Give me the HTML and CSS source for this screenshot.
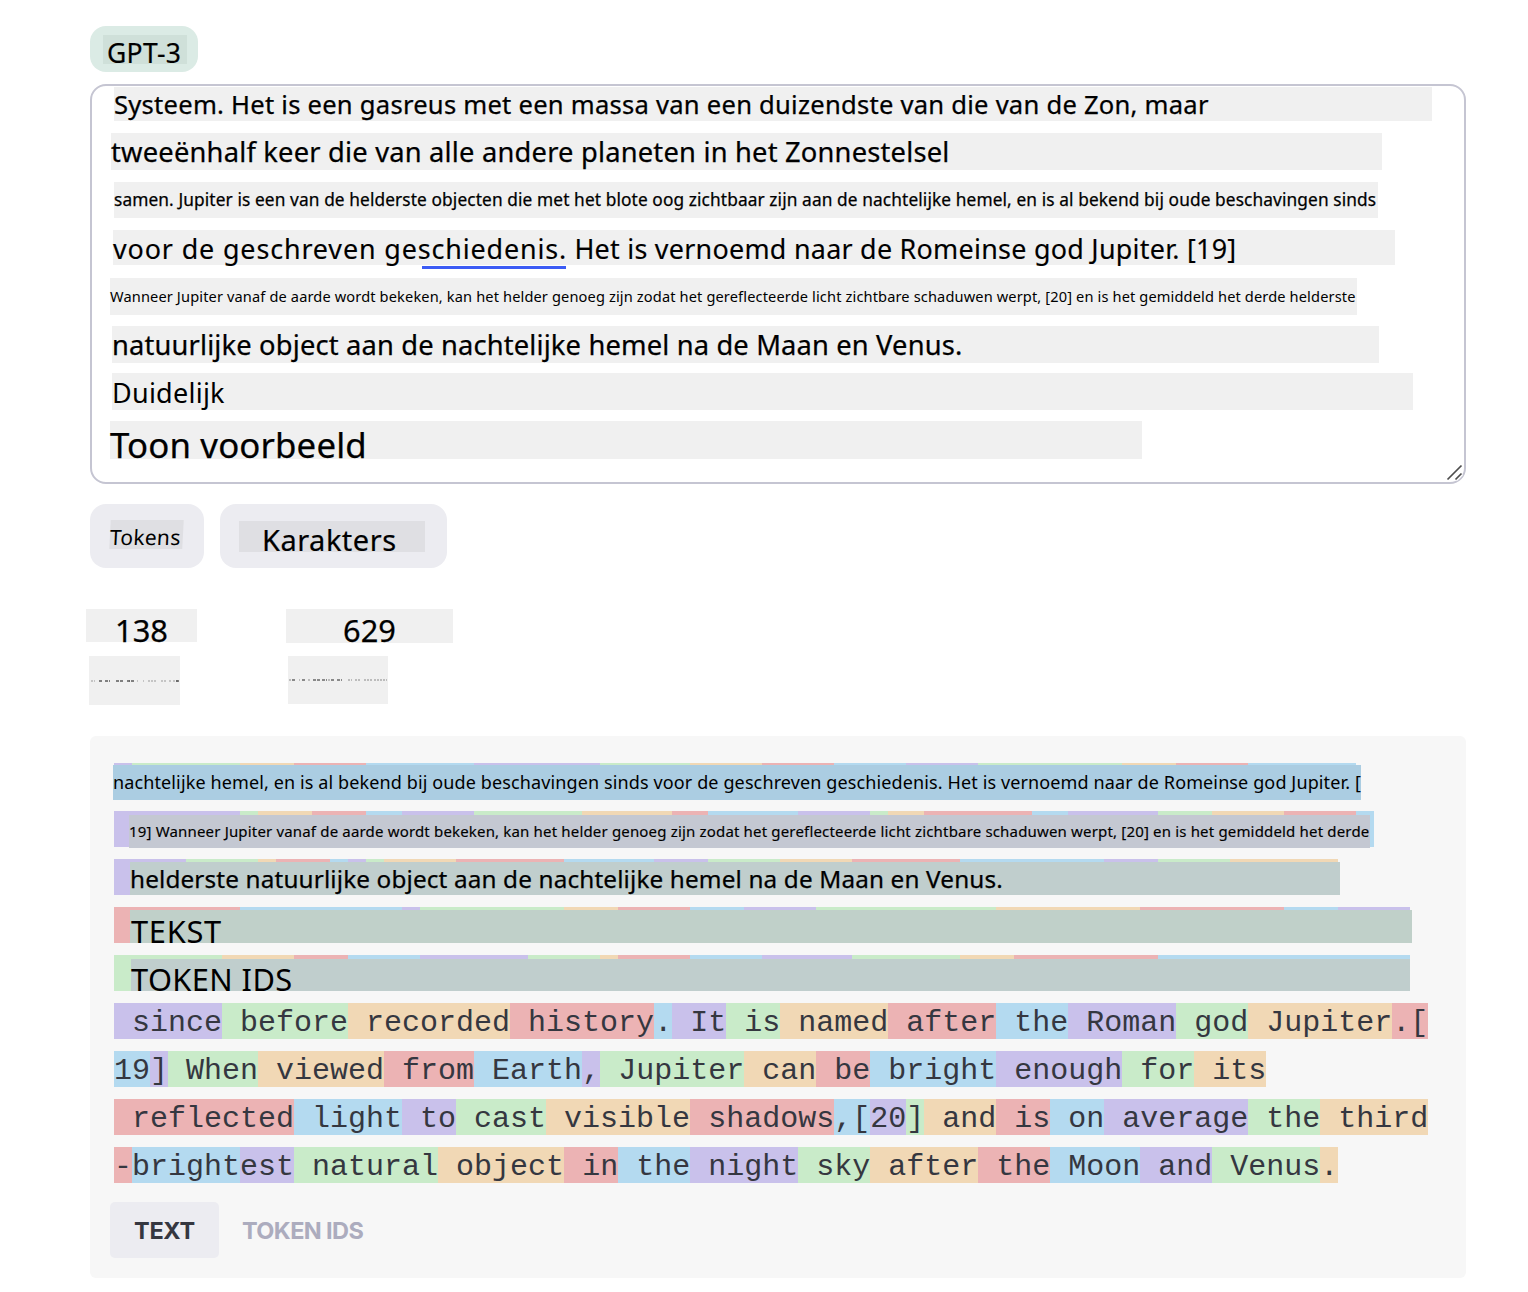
FILE: index.html
```html
<!DOCTYPE html>
<html lang="nl">
<head>
<meta charset="utf-8">
<title>Tokenizer</title>
<link rel="stylesheet" href="styles.css">
</head>
<body>
<main class="page">
  <div class="chip"><span class="label label-gpt">GPT-3</span></div>

  <section class="editor">
    <p class="line l1">Systeem. Het is een gasreus met een massa van een duizendste van die van de Zon, maar</p>
    <p class="line l2">tweeënhalf keer die van alle andere planeten in het Zonnestelsel</p>
    <p class="line l3">samen. Jupiter is een van de helderste objecten die met het blote oog zichtbaar zijn aan de nachtelijke hemel, en is al bekend bij oude beschavingen sinds</p>
    <p class="line l4"><span class="wide">voor de geschreven geschiedenis.</span> Het is vernoemd naar de Romeinse god Jupiter. [19]</p>
    <p class="line l5">Wanneer Jupiter vanaf de aarde wordt bekeken, kan het helder genoeg zijn zodat het gereflecteerde licht zichtbare schaduwen werpt, [20] en is het gemiddeld het derde helderste</p>
    <p class="line l6">natuurlijke object aan de nachtelijke hemel na de Maan en Venus.</p>
    <p class="line l7">Duidelijk</p>
    <p class="line l8">Toon voorbeeld</p>
    <svg class="grip" width="18" height="18" viewBox="0 0 18 18"><path d="M2 16 16 2M10 16l6-6" fill="none" stroke="#fff" stroke-width="3"/><path d="M1.500 15.500 15.500 1.500M9.500 15.500l6-6" fill="none" stroke="#4d4d4d" stroke-width="1.700"/></svg>
  </section>

  <div class="actions">
    <div class="button button-tokens"><span class="label label-tokens">Tokens</span></div>
    <div class="button button-chars"><span class="label label-chars">Karakters</span></div>
  </div>

  <div class="stats">
    <div class="stat stat-tokens">
      <div class="value">138</div>
      <div class="note"><svg width="91" height="2" viewBox="0 0 91 2"><path d="M2 1h4M40 1h1M48 1h1M54 1h1M59 1h9M72 1h6M80 1h2M84 1h5" stroke="#999" stroke-dasharray="2 1"/><path d="M10 1h4M16 1h5M27 1h8M38 1h8M87 1h3" stroke="#111" stroke-dasharray="3 1"/></svg></div>
    </div>
    <div class="stat stat-chars">
      <div class="value">629</div>
      <div class="note"><svg width="100" height="2" viewBox="0 0 100 2"><path d="M1 1h3M11 1h1M20 1h3M40 1h3M60 1h4M67 1h5M76 1h9M86 1h5M92 1h7" stroke="#888" stroke-dasharray="2 1"/><path d="M4 1h3M14 1h4M25 1h8M34 1h5M43 1h3M49 1h5" stroke="#222" stroke-dasharray="3 1"/></svg></div>
    </div>
  </div>

  <section class="panel">
    <div class="row"><i class="p w1"></i><i class="g w6"></i><i class="o w3"></i><i class="r w4"></i><i class="b w6"></i><i class="p w7"></i><i class="g w5"></i><i class="o w4"></i><i class="r w4"></i><i class="b w4"></i><i class="p w4"></i><i class="g w8"></i><i class="o w3"></i><i class="r w4"></i><i class="b w6"></i><p class="cover c1">nachtelijke hemel, en is al bekend bij oude beschavingen sinds voor de geschreven geschiedenis. Het is vernoemd naar de Romeinse god Jupiter. [</p></div>
    <div class="row"><i class="p w7"></i><i class="g w1"></i><i class="o w3"></i><i class="r w3"></i><i class="b w2"></i><i class="p w4"></i><i class="g w6"></i><i class="o w5"></i><i class="r w2"></i><i class="b w5"></i><i class="p w4"></i><i class="g w1"></i><i class="o w2"></i><i class="r w6"></i><i class="b w2"></i><i class="p w5"></i><i class="g w3"></i><i class="o w4"></i><i class="r w4"></i><i class="b w1"></i><p class="cover c2">19] Wanneer Jupiter vanaf de aarde wordt bekeken, kan het helder genoeg zijn zodat het gereflecteerde licht zichtbare schaduwen werpt, [20] en is het gemiddeld het derde</p></div>
    <div class="row"><i class="p w4"></i><i class="g w4"></i><i class="o w1"></i><i class="r w3"></i><i class="b w1"></i><i class="p w1"></i><i class="g w1"></i><i class="o w4"></i><i class="r w6"></i><i class="b w5"></i><i class="p w3"></i><i class="g w4"></i><i class="o w4"></i><i class="r w6"></i><i class="b w8"></i><i class="p w3"></i><i class="g w4"></i><i class="o w6"></i><p class="cover c3">helderste natuurlijke object aan de nachtelijke hemel na de Maan en Venus.</p></div>
    <div class="row"><i class="r w7"></i><i class="b w9"></i><i class="p w1"></i><i class="g w8"></i><i class="o w3"></i><i class="r w4"></i><i class="b w3"></i><i class="p w4"></i><i class="g w10"></i><i class="o w8"></i><i class="r w8"></i><i class="b w3"></i><i class="p w4"></i><p class="cover c4">TEKST</p></div>
    <div class="row"><i class="g w6"></i><i class="o w4"></i><i class="r w3"></i><i class="b w4"></i><i class="p w6"></i><i class="g w4"></i><i class="o w1"></i><i class="r w4"></i><i class="b w4"></i><i class="p w5"></i><i class="g w6"></i><i class="o w3"></i><i class="r w8"></i><i class="b w14"></i><p class="cover c5">TOKEN IDS</p></div>
    <div class="row"><span class="p"> since</span><span class="g"> before</span><span class="o"> recorded</span><span class="r"> history</span><span class="b">.</span><span class="p"> It</span><span class="g"> is</span><span class="o"> named</span><span class="r"> after</span><span class="b"> the</span><span class="p"> Roman</span><span class="g"> god</span><span class="o"> Jupiter</span><span class="r">.[</span></div>
    <div class="row"><span class="b">19</span><span class="p">]</span><span class="g"> When</span><span class="o"> viewed</span><span class="r"> from</span><span class="b"> Earth</span><span class="p">,</span><span class="g"> Jupiter</span><span class="o"> can</span><span class="r"> be</span><span class="b"> bright</span><span class="p"> enough</span><span class="g"> for</span><span class="o"> its</span></div>
    <div class="row"><span class="r"> reflected</span><span class="b"> light</span><span class="p"> to</span><span class="g"> cast</span><span class="o"> visible</span><span class="r"> shadows</span><span class="b">,[</span><span class="p">20</span><span class="g">]</span><span class="o"> and</span><span class="r"> is</span><span class="b"> on</span><span class="p"> average</span><span class="g"> the</span><span class="o"> third</span></div>
    <div class="row"><span class="r">-</span><span class="b">bright</span><span class="p">est</span><span class="g"> natural</span><span class="o"> object</span><span class="r"> in</span><span class="b"> the</span><span class="p"> night</span><span class="g"> sky</span><span class="o"> after</span><span class="r"> the</span><span class="b"> Moon</span><span class="p"> and</span><span class="g"> Venus</span><span class="o">.</span></div>
    <div class="tabs"><span class="tab tab-on">TEXT</span><span class="tab">TOKEN IDS</span></div>
  </section>
</main>
</body>
</html>
```
FILE: styles.css
```css
* { box-sizing: border-box; }
body { margin: 0; background: #fff; color: #000; font-family: "Noto Sans", sans-serif; }
p { margin: 0; }
.page { padding: 26px 62px 14px 90px; }

.chip { width: 108px; height: 46px; padding: 9px 11px 8px 13px; border-radius: 16px; background: #dbebe5; }
.label { display: block; white-space: nowrap; -webkit-text-stroke: .2px; }
.label-gpt { height: 29px; padding-left: 4px; background: #cfe0d9; font-size: 26.5px; line-height: 36px; letter-spacing: .3px; }

.editor { position: relative; height: 400px; margin-top: 12px; padding: 1px 0 0 18px; border: 2px solid #c5c5d2; border-radius: 16px; display: flex; flex-direction: column; align-items: flex-start; }
.line { background: #f0f0f0; white-space: nowrap; flex: none; -webkit-text-stroke: .25px; }
.l1 { width: 1318px; height: 34px; margin-left: 4px; font-size: 25.6px; line-height: 36px; letter-spacing: .237px; }
.l2 { width: 1271px; height: 37px; margin: 12px 0 0 1px; font-size: 27.3px; line-height: 37px; letter-spacing: .2px; }
.l3 { width: 1264px; height: 36px; margin: 12px 0 0 4px; font-size: 17.3px; line-height: 36px; letter-spacing: .108px; }
.l4 { position: relative; width: 1282px; height: 35px; margin: 12px 0 0 3px; font-size: 26.9px; line-height: 37px; letter-spacing: .265px; -webkit-text-stroke: .15px; }
.l4 .wide { letter-spacing: .87px; }
.l4::after { content: ""; position: absolute; left: 309px; top: 36px; width: 144px; height: 3px; background: #3c5cf5; }
.l5 { width: 1247px; height: 37px; margin-top: 13px; font-size: 14.6px; line-height: 37px; letter-spacing: .134px; -webkit-text-stroke: 0; }
.l6 { width: 1267px; height: 37px; margin: 11px 0 0 2px; font-size: 27.3px; line-height: 37px; letter-spacing: .155px; }
.l7 { width: 1301px; height: 37px; margin: 10px 0 0 2px; font-size: 27px; line-height: 39px; letter-spacing: .25px; -webkit-text-stroke: 0; }
.l8 { width: 1032px; height: 38px; margin-top: 11px; font-size: 34.8px; line-height: 47px; letter-spacing: .15px; }
.grip { position: absolute; right: 0; bottom: 0; }

.actions { display: flex; gap: 16px; margin-top: 20px; }
.button { height: 64px; border-radius: 16px; background: #ececf1; }
.button-tokens { width: 114px; padding: 16px 21px 0 20px; }
.button-chars { width: 227px; padding: 17px 22px 0 19px; }
.label-tokens { height: 29px; background: #dfdfe3; font-size: 21px; line-height: 34px; letter-spacing: .3px; transform: skewX(-3deg); -webkit-text-stroke: 0; }
.label-chars { height: 31px; padding-left: 23px; background: #dfdfe3; font-size: 29px; line-height: 38px; letter-spacing: .5px; }

.stats { display: flex; height: 168px; padding-top: 41px; }
.value { background: #f0f0f0; font-size: 30.8px; text-align: center; line-height: 42px; height: 33px; -webkit-text-stroke: .25px; }
.note { display: flex; align-items: center; justify-content: center; background: #f0f0f0; height: 49px; margin-top: 14px; }
.stat-tokens { width: 200px; margin-left: -4px; }
.stat-tokens .value { width: 111px; }
.stat-tokens .note { width: 91px; margin-left: 3px; }
.stat-chars .value { width: 167px; height: 34px; }
.stat-chars .note { width: 100px; height: 48px; margin: 13px 0 0 2px; }

.panel { height: 542px; padding: 27px 24px 20px; border-radius: 6px; background: #f7f7f7; }
.row { position: relative; display: flex; height: 36px; margin-bottom: 12px; color: #353740; font: 30px/41px "Liberation Mono", monospace; white-space: pre; }
.row > span { height: 36px; }
.p { background: #c9c1eb; }
.g { background: #c9ebc9; }
.o { background: #f1d8b5; }
.r { background: #ecb3b4; }
.b { background: #b4daf0; }
.w1 { width: 18px; }
.w2 { width: 36px; }
.w3 { width: 54px; }
.w4 { width: 72px; }
.w5 { width: 90px; }
.w6 { width: 108px; }
.w7 { width: 126px; }
.w8 { width: 144px; }
.w9 { width: 162px; }
.w10 { width: 180px; }
.w14 { width: 252px; }

/* translated lines laid over the token rows */
.cover { position: absolute; color: #000; font-family: "Noto Sans", sans-serif; }
.c1 { left: -1px; top: 2px; width: 1248px; height: 35px; background: #abcde2; font-size: 18px; line-height: 34px; letter-spacing: .12px; }
.c2 { left: 15px; top: 4px; width: 1241px; height: 33px; background: #c4c8d2; font-size: 15px; line-height: 33px; letter-spacing: .17px; -webkit-text-stroke: .15px; }
.c3 { left: 16px; top: 3px; width: 1210px; height: 33px; background: #c0cecd; font-size: 24.3px; line-height: 33px; letter-spacing: .145px; -webkit-text-stroke: .25px; }
.c4 { left: 16px; top: 3px; width: 1282px; height: 33px; padding-left: 1px; background: #c0d0c9; font-size: 30.8px; line-height: 43px; letter-spacing: .7px; }
.c5 { left: 17px; top: 4px; width: 1279px; height: 32px; background: #c0cecd; font-size: 30.8px; line-height: 41px; letter-spacing: .4px; }

.tabs { display: flex; margin: 19px 0 0 -4px; }
.tab { height: 56px; padding: 0 24px; border-radius: 5px; color: #acacbe; font: 700 23.5px/58px Inter, sans-serif; letter-spacing: -.6px; white-space: nowrap; }
.tab + .tab { padding-left: 23px; }
.tab-on { width: 109px; background: #ececf1; color: #353740; letter-spacing: -.3px; }
```
